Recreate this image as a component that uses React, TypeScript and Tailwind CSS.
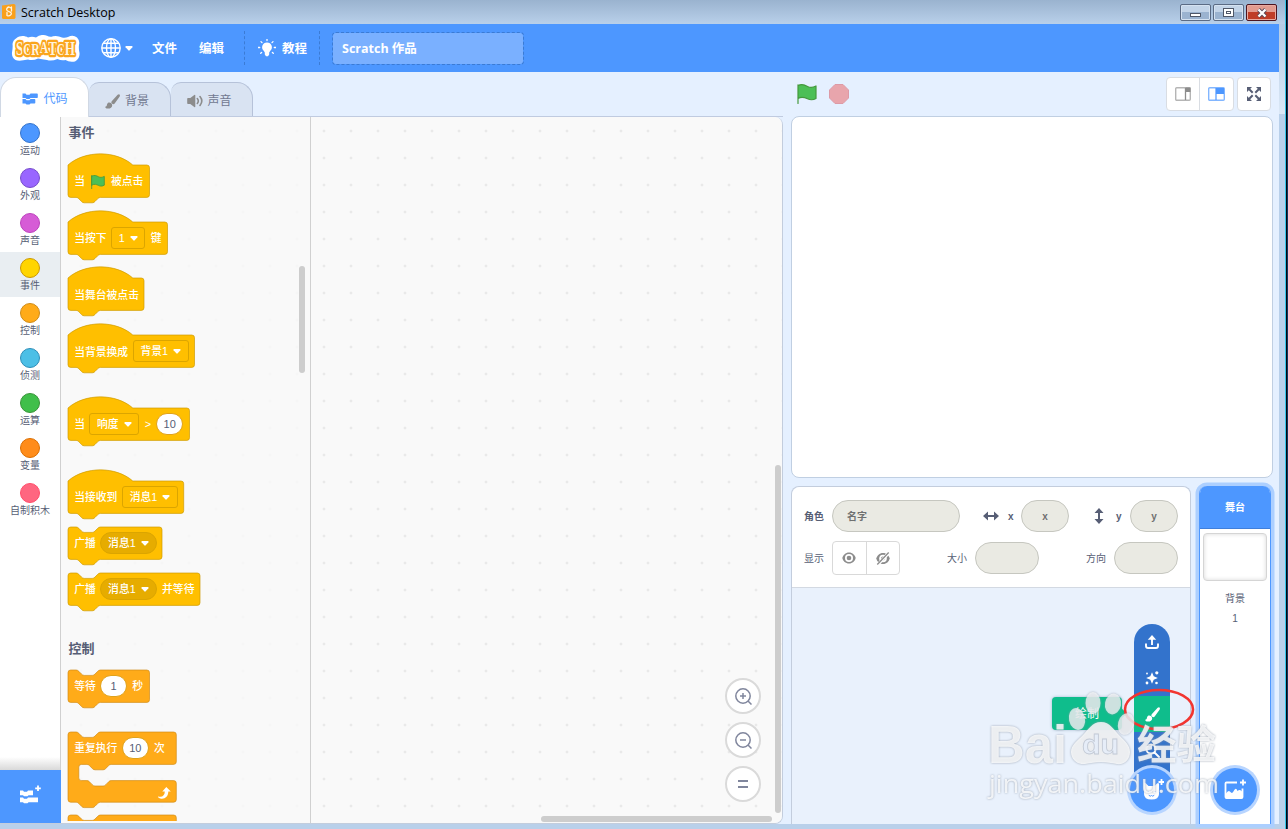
import { FC, PropsWithChildren, ReactNode } from "react";
import clsx from "clsx";

const SCALE = 0.675;

const NOTCH_RIGHT =
  "c2,0 3,1 4,2 l4,4 c1,1 2,2 4,2 h12 c2,0 3,-1 4,-2 l4,-4 c1,-1 2,-2 4,-2";
const NOTCH_LEFT =
  "c-2,0 -3,1 -4,2 l-4,4 c-1,1 -2,2 -4,2 h-12 c-2,0 -3,-1 -4,-2 l-4,-4 c-1,-1 -2,-2 -4,-2";

type Shape = "hat" | "stack" | "loop";

const blockPath = (shape: Shape, width: number) => {
  const w = width / SCALE - 4;
  const start =
    shape === "hat" ? "m0,0 c25,-22 71,-22 96,0" : `m0,4 a4,4 0 0,1 4,-4 h8 ${NOTCH_RIGHT}`;
  const head = `${start} H${w} a4,4 0 0,1 4,4 v40 a4,4 0 0,1 -4,4`;
  const end = `H48 ${NOTCH_LEFT} h-8 a4,4 0 0,1 -4,-4 z`;
  if (shape !== "loop") return `${head} ${end}`;
  return `${head} H64 ${NOTCH_LEFT} h-8 a4,4 0 0,0 -4,4 v16 a4,4 0 0,0 4,4 h8 ${NOTCH_RIGHT} H${w} a4,4 0 0,1 4,4 v24 a4,4 0 0,1 -4,4 ${end}`;
};

type BlockProps = PropsWithChildren<{
  shape: Shape;
  width: number;
  control?: boolean;
  className?: string;
}>;

const Block: FC<BlockProps> = ({ shape, width, control, className, children }) => (
  <div
    className={clsx("relative shrink-0", shape === "loop" ? "h-[70.2px]" : "h-[32.4px]", className)}
    style={{ width }}
  >
    <svg className="absolute left-0 top-0 size-full overflow-visible">
      <path
        d={blockPath(shape, width)}
        transform={`scale(${SCALE})`}
        fill={control ? "#ffab19" : "#ffbf00"}
        stroke={control ? "#cf8b17" : "#cc9900"}
        strokeWidth="1"
      />
      {shape === "loop" && (
        <path
          d={`M${width - 18},64.5 c4,1 6.500,-1 6.500,-5 h-2.500 l4,-4.500 l4.500,4.500 h-2.500 c0,5 -3.500,8 -8,7 c-2,-.6 -3,-2 -2,-2 z`}
          fill="#fff"
        />
      )}
    </svg>
    <div className="relative flex h-[32.4px] items-center gap-[5.4px] pt-[1.6px] pl-[6.2px] text-[10.8px] leading-none font-medium whitespace-nowrap text-white">
      {children}
    </div>
  </div>
);

const Caret = () => (
  <svg width="8" height="5" viewBox="0 0 8 5">
    <path d="M1 0h6q1 .4.400 1.200L4.700 4.300q-.7.700-1.400 0L.6 1.200Q0 .4 1 0z" fill="#fff" />
  </svg>
);

const Field: FC<PropsWithChildren<{ className: string; round?: boolean }>> = ({
  children,
  className,
  round,
}) => (
  <span
    className={clsx(
      "-mt-[1.6px] -ml-[1px] flex h-[21.6px] shrink-0 items-center justify-center gap-[5px] border border-[#dba500] pt-px",
      round ? "rounded-full bg-[#e6ac00]" : "rounded-[3px]",
      className,
    )}
  >
    {children}
    <Caret />
  </span>
);

const NumberInput: FC<{ value: number }> = ({ value }) => (
  <span className="-mt-[1.6px] -ml-[.8px] flex h-[21.6px] w-[26.6px] shrink-0 items-center justify-center rounded-full border border-[#e0a21a] bg-white pt-px text-[11px] font-normal text-[#575e75]">
    {value}
  </span>
);

const Flag: FC<{ className?: string }> = ({ className }) => (
  <svg viewBox="0 0 20 20" className={className}>
    <path
      d="M1 .8v18.700M1 1.600c4-2 7-.6 9.500.8s5 1.400 8.500-.4v12.500c-3.500 2-6 1.500-8.500.3s-5.500-2.500-9.500-.3z"
      fill="#4cbf56"
      stroke="#45993d"
      strokeWidth="1.200"
      strokeLinejoin="round"
      strokeLinecap="round"
    />
  </svg>
);

const CATEGORIES = [
  { name: "运动", fill: "#4c97ff", border: "#3373cc" },
  { name: "外观", fill: "#9966ff", border: "#774dcb" },
  { name: "声音", fill: "#d65cd6", border: "#bd42bd" },
  { name: "事件", fill: "#ffd500", border: "#cc9900" },
  { name: "控制", fill: "#ffab19", border: "#cf8b17" },
  { name: "侦测", fill: "#4cbfe6", border: "#2e8eb8" },
  { name: "运算", fill: "#40bf4a", border: "#389438" },
  { name: "变量", fill: "#ff8c1a", border: "#db6e00" },
  { name: "自制积木", fill: "#ff6680", border: "#ff4d6a" },
];

const TitleBar = () => (
  <div className="flex h-6 shrink-0 items-start bg-linear-to-b from-[#9ab3cf] to-[#b9d0ea]">
    <svg width="15" height="17" viewBox="0 0 15 17" className="mt-[3px] ml-[2px]">
      <path d="M0 2.500 11.500 1q2-.2 2 1.500v12q0 1.500-2 1.500H1.500Q0 16 0 14.500z" fill="#f9a01b" />
      <path
        d="M9.500 5.500Q7 2.800 5.200 5T7 8.600t1.800 3.200-3.800.7V9.500M9.500 4v4"
        fill="none"
        stroke="#fff3df"
        strokeWidth="1.300"
        strokeLinecap="round"
      />
    </svg>
    <span className="mt-[4px] ml-1 font-['Open_Sans','Noto_Sans',sans-serif] text-[12.5px] leading-[17px] text-black">
      Scratch Desktop
    </span>
    <div className="mt-1 ml-auto flex gap-[2px] pr-[8px]">
      <span className="flex h-[17px] w-[31px] items-center justify-center rounded-[2px] border border-[#5b6b84] bg-linear-to-b from-[#c3d4e8] from-50% to-[#9bb3d0] to-50% shadow-[inset_0_0_0_1px_#d5e2f1]">
        <span className="mt-1 h-[4px] w-[11px] border border-[#4f5768] bg-white" />
      </span>
      <span className="flex h-[17px] w-[31px] items-center justify-center rounded-[2px] border border-[#5b6b84] bg-linear-to-b from-[#c3d4e8] from-50% to-[#9bb3d0] to-50% shadow-[inset_0_0_0_1px_#d5e2f1]">
        <span className="flex h-[9px] w-[11px] items-center justify-center border border-[#4f5768] bg-white">
          <span className="h-[3px] w-[5px] border border-[#4f5768]" />
        </span>
      </span>
      <span className="flex h-[17px] w-[31px] items-center justify-center rounded-[2px] border border-[#4d1520] bg-linear-to-b from-[#e29b8f] from-50% to-[#bf3d27] to-50% shadow-[inset_0_0_0_1px_#e9aaa0]">
        <svg width="12" height="10" viewBox="0 0 12 10">
          <path d="m2.500 1.500 7 7m0-7-7 7" stroke="#5a4a58" strokeWidth="4" />
          <path d="m2.500 1.500 7 7m0-7-7 7" stroke="#fff" strokeWidth="2.300" />
        </svg>
      </span>
    </div>
  </div>
);

const Logo = () => (
  <svg width="70" height="27" viewBox="0 0 70 27" className="shrink-0">
    <path
      d="M6 3.500C10 0 15 .8 18 2.500q4-1.500 8 0Q31-1.500 37 .8q3 1.700 6 .4 5-.8 9 1.300 3 .8 6-.5 5-2.500 9 .5 3 3 2 7.500-.5 4 .5 8 .5 6-4.500 8.500-6 1-9.500-1.500-4 1-8-1-6 2.500-10.500 1-5-.8-9-1.500-5 2.500-10 1-9 2-12.500.5Q1.500 22.500 2 17.500 3 12 2.500 9 3 5 6 3.500z"
      fill="#fff"
    />
    <text
      x="6"
      y="20"
      fontFamily="'Liberation Serif', serif"
      fontSize="19"
      textLength="59"
      lengthAdjust="spacingAndGlyphs"
      fill="#fff3de"
      stroke="#faa51d"
      strokeWidth="4.500"
      strokeLinejoin="round"
      paintOrder="stroke"
    >
      <tspan>S</tspan>
      <tspan fontSize="16">C</tspan>
      <tspan fontSize="17">R</tspan>
      <tspan fontSize="17" dy="-2">A</tspan>
      <tspan dy="2">T</tspan>
      <tspan fontSize="16">C</tspan>
      <tspan>H</tspan>
    </text>
  </svg>
);

const MenuBar = () => (
  <div className="flex h-12 shrink-0 items-center bg-[#4d97ff] pl-[10px] text-[12.5px] font-bold text-white">
    <Logo />
    <svg width="20" height="20" viewBox="0 0 20 20" className="ml-[21px]" fill="none" stroke="#fff" strokeWidth="1.400">
      <circle cx="10" cy="10" r="9.200" />
      <ellipse cx="10" cy="10" rx="4.500" ry="9.200" />
      <path d="M10 1v18M1 10h18M2.500 5.200h15M2.500 14.800h15" />
    </svg>
    <span className="ml-1">
      <Caret />
    </span>
    <span className="ml-[19px] w-[25px] pt-[2px]">文件</span>
    <span className="ml-[22px] w-[25px] pt-[2px]">编辑</span>
    <span className="ml-5 h-[34px] border-l border-dashed border-[#3b7bd4]" />
    <svg width="18" height="18" viewBox="0 0 18 18" className="ml-[13px]">
      <path
        d="M9 3.400a4.800 4.800 0 0 1 3.100 8.500l-.7 1.300H6.600l-.7-1.300A4.800 4.800 0 0 1 9 3.400zM6.800 13h4.400v2.600L10 17.200H8l-1.200-1.600z"
        fill="#fff"
      />
      <path d="M9 .2v1.300M3 2.600l1 1M15 2.600l-1 1M.2 8.500h1.500M16.300 8.500h1.500M2.700 14.300l.9-.8M15.300 14.300l-.9-.8" stroke="#fff" strokeWidth="1.300" strokeLinecap="round" />
    </svg>
    <span className="ml-[6px] w-[25px] pt-[2px]">教程</span>
    <span className="ml-3 h-[34px] border-l border-dashed border-[#3b7bd4]" />
    <span className="ml-3 flex h-[33px] w-[192px] items-center rounded-[4px] border border-dashed border-[#3b7bd4] bg-[#7ab0ff] bg-clip-padding pt-[2px] pl-[9px] font-['Open_Sans','Noto_Sans_CJK_SC',sans-serif]">
      Scratch 作品
    </span>
  </div>
);

const CodeIcon = () => (
  <svg width="16" height="12" viewBox="0 0 16 12" fill="#4d97ff">
    <path d="M.5.500h3l1 1.200h3l1-1.200H15q.8 0 .8.800v2.900q0 .8-.8.800H8.500l-1 1H4.500l-1-1h-3zM.5 6h3l1 1.200h3L8.500 6h4q.8 0 .8.800v2.900q0 .8-.8.800h-4l-1 1H4.500l-1-1h-3z" />
  </svg>
);

const Brush: FC<{ className?: string }> = ({ className }) => (
  <svg viewBox="0 0 16 16" className={className} fill="currentColor">
    <path d="M15.400.4c.8.600.6 1.600.1 2.400l-5.200 7.300c-.8 1-2 .9-2.900.1s-.9-1.900 0-2.800L13.500.9c.6-.6 1.300-.9 1.900-.5z" />
    <path d="M3 9.500c1.900-1.200 4.700.3 4.700 2.500 0 2.800-2.700 3.900-5.200 3.500-.9-.1-1.900-.7-2.200-1.500-.2-.5.2-.8.700-.8 1.500-.1.600-2.500 2-3.700z" />
  </svg>
);

const Tabs = () => (
  <div className="flex h-[45px] items-end border-b border-[#c0cbe0] text-[12px]">
    <div className="-mb-px flex h-10 w-[89px] items-center justify-center gap-[5px] rounded-t-[16px] border border-b-0 border-[#d0d8e4] bg-white pt-[3px] pl-px text-[#4d97ff]">
      <CodeIcon />
      <span>代码</span>
    </div>
    <div className="flex h-[34px] w-[82px] items-center justify-center gap-[5px] rounded-tr-[16px] rounded-tl-[10px] border border-b-0 border-l-0 border-[#b6c2d9] bg-[#d9e3f2] pt-[3px] pr-[5px] text-[#717890]">
      <Brush className="size-[15px] text-[#8c8c8c]" />
      <span>背景</span>
    </div>
    <div className="flex h-[34px] w-[82px] items-center justify-center gap-[4px] rounded-tr-[16px] rounded-tl-[10px] border border-b-0 border-l-0 border-[#b6c2d9] bg-[#d9e3f2] pt-[3px] pr-[4px] text-[#717890]">
      <svg width="16" height="14" viewBox="0 0 16 14" fill="#8c8c8c">
        <path d="M1 4h2.300l4-3q1-.6 1 .6v10.800q0 1.200-1 .6l-4-3H1q-.8 0-.8-.8V4.800Q.2 4 1 4z" />
        <path d="M10.300 4.500q2 2.500 0 5M13 2.500q3.600 4.500 0 9" fill="none" stroke="#8c8c8c" strokeWidth="1.600" strokeLinecap="round" />
      </svg>
      <span>声音</span>
    </div>
  </div>
);

const Categories = () => (
  <div className="flex w-[61px] shrink-0 flex-col border-r border-[#d0d0d0] bg-white">
    {CATEGORIES.map(({ name, fill, border }) => (
      <div
        key={name}
        className={clsx(
          "flex h-[45px] flex-col items-center pt-[6px] text-[#575e75]",
          name === "事件" && "bg-[#e9eef2]",
        )}
      >
        <span
          className="size-5 shrink-0 rounded-full border"
          style={{ backgroundColor: fill, borderColor: border }}
        />
        <span className="mt-[2px] text-[10px] leading-[12px] whitespace-nowrap">{name}</span>
      </div>
    ))}
    <div className="mt-auto -mr-px">
      <div className="mr-px h-[13px] bg-linear-to-b from-white to-[#d9d9d9]" />
      <div className="flex h-[53px] items-center justify-center bg-[#4d97ff]">
        <svg width="22" height="20" viewBox="0 0 22 20" fill="#fff" className="mb-[3px]">
          <path d="M0 5.500h3l1 1.200h3l1-1.200h5v4.700H8.500l-1 1H4l-1-1H0zM0 12.500h3l1 1.200h3l1-1.200h10v4.700H8.500l-1 1H4l-1-1H0z" />
          <path d="M18 .5v5.600M15.200 3.300h5.600" stroke="#fff" strokeWidth="1.800" />
        </svg>
      </div>
    </div>
  </div>
);

const Palette = () => (
  <div className="relative flex w-[250px] shrink-0 flex-col overflow-hidden border-r border-[#d0d0d0] bg-[#f9f9f9] bg-[radial-gradient(circle_at_center,#f3f3f3_0.9px,transparent_1.2px)] bg-size-[27px_27px] bg-position-[6.5px_0.5px] pl-[7px]">
    <div className="flex h-[30px] shrink-0 items-center pt-px pl-[.6px] text-[13px] font-bold text-[#575e75]">事件</div>
    <Block shape="hat" width={81.5} className="mt-[17.9px]">
      当
      <Flag className="mx-[1px] size-[14px]" />
      <span className="-ml-[.8px]">被点击</span>
    </Block>
    <Block shape="hat" width={99.5} className="mt-[24.3px]">
      当按下
      <Field className="w-[34.4px]">1</Field>键
    </Block>
    <Block shape="hat" width={76} className="mt-[24.3px]">
      当舞台被点击
    </Block>
    <Block shape="hat" width={126.5} className="mt-[24.3px]">
      当背景换成
      <Field className="w-[56.5px]">背景1</Field>
    </Block>
    <Block shape="hat" width={121.5} className="mt-[40.5px]">
      当<Field className="w-[50px]">响度</Field>
      <span className="w-[7px]">&gt;</span>
      <NumberInput value={10} />
    </Block>
    <Block shape="hat" width={115.7} className="mt-[40.5px]">
      当接收到
      <Field className="w-[56.5px]">消息1</Field>
    </Block>
    <Block shape="stack" width={94} className="mt-[13.5px]">
      广播
      <Field round className="w-[56.5px]">消息1</Field>
    </Block>
    <Block shape="stack" width={132} className="mt-[13.5px]">
      广播
      <Field round className="w-[56.5px]">消息1</Field>
      并等待
    </Block>
    <div className="mt-[27.9px] flex h-[30px] shrink-0 items-center pt-px pl-[.6px] text-[13px] font-bold text-[#575e75]">控制</div>
    <Block shape="stack" control width={81.5} className="mt-[6.8px]">
      等待
      <NumberInput value={1} />秒
    </Block>
    <Block shape="loop" control width={108.3} className="mt-[29.8px]">
      重复执行
      <NumberInput value={10} />次
    </Block>
    <Block shape="loop" control width={108.3} className="mt-[13.5px]" />
    <div className="absolute right-[5px] top-[149px] h-[107px] w-[6px] rounded-full bg-[#cdcdcd]" />
    <div className="absolute inset-x-0 bottom-0 h-[2px] bg-[#f9f9f9]" />
  </div>
);

const ZoomButton: FC<PropsWithChildren> = ({ children }) => (
  <span className="flex size-9 items-center justify-center rounded-full border-2 border-[#dadada] bg-white">
    <svg width="18" height="18" viewBox="0 0 18 18" fill="none" stroke="#80869d" strokeWidth="1.500">
      {children}
    </svg>
  </span>
);

const Workspace = () => (
  <div className="relative min-w-0 flex-1 bg-[#f9f9f9] bg-[radial-gradient(circle_at_center,#dedede_0.9px,transparent_1.2px)] bg-size-[27px_27px] bg-position-[-0.5px_0.5px]">
    <div className="absolute right-[21px] bottom-[21px] flex flex-col gap-2">
      <ZoomButton>
        <circle cx="9" cy="9" r="7.200" />
        <path d="m14 14 3.500 3.500M9 6v6M6 9h6" />
      </ZoomButton>
      <ZoomButton>
        <circle cx="9" cy="9" r="7.200" />
        <path d="m14 14 3.500 3.500M6 9h6" />
      </ZoomButton>
      <ZoomButton>
        <path d="M4 6h10M4 12h10" strokeWidth="2" />
      </ZoomButton>
    </div>
    <div className="absolute right-px bottom-[10px] h-[348px] w-[6px] rounded-full bg-[#cdcdcd]" />
    <div className="absolute right-[10px] bottom-px h-[6px] w-[231px] rounded-full bg-[#cdcdcd]" />
  </div>
);

const StageHeader = () => (
  <div className="flex h-11 items-center pr-[2px] pl-[6px]">
    <Flag className="size-5" />
    <svg width="20" height="20" viewBox="0 0 20 20" className="ml-3">
      <path d="M6 .5h8L19.500 6v8L14 19.500H6L.5 14V6z" fill="#e8a5ac" stroke="#dd9aa6" />
    </svg>
    <div className="ml-auto flex h-[34px] w-[68px] rounded-[4px] border border-[#d9dde3] bg-white">
      <span className="flex w-[33px] items-center justify-center border-r border-[#d9dde3]">
        <svg width="16" height="14" viewBox="0 0 16 14">
          <rect x=".7" y=".7" width="14.600" height="12.600" rx="1" fill="#fff" stroke="#b5b5b5" strokeWidth="1.400" />
          <path d="M10.500 1v12" stroke="#8c8c8c" strokeWidth="1.300" />
          <path d="M10.500 .5H15.500v4.500h-5z" fill="#8c8c8c" />
        </svg>
      </span>
      <span className="flex flex-1 items-center justify-center">
        <svg width="17" height="14" viewBox="0 0 17 14">
          <rect x=".7" y=".7" width="15.600" height="12.600" rx="1" fill="#fff" stroke="#82b6ff" strokeWidth="1.400" />
          <path d="M8 1h8v6H8z" fill="#4d97ff" />
          <path d="M8 1v12" stroke="#4d97ff" strokeWidth="1.200" />
        </svg>
      </span>
    </div>
    <div className="ml-[3px] flex size-[34px] items-center justify-center rounded-[4px] border border-[#d9dde3] bg-white">
      <svg width="14" height="14" viewBox="0 0 14 14" fill="#575e75" stroke="#575e75">
        <path d="M0 0h5L0 5zM14 0v5L9 0zM0 14V9l5 5zM14 14H9l5-5z" stroke="none" />
        <path d="m2 2 3.700 3.700M12 2 8.300 5.700M2 12l3.700-3.700M12 12 8.300 8.300" strokeWidth="2" />
      </svg>
    </div>
  </div>
);

const Pill: FC<{ className: string; children?: ReactNode }> = ({ className, children }) => (
  <span
    className={clsx(
      "flex h-8 shrink-0 items-center rounded-full border border-[#c6c7c0] bg-[#eaeae3] text-[#6f7070]",
      className,
    )}
  >
    {children}
  </span>
);

const SpriteInfo = () => (
  <div className="h-[101px] shrink-0 border-b border-[#d3d9e2] bg-white pt-[13px] pl-[12px] text-[10px] text-[#575e75]">
    <div className="flex h-8 items-center font-bold">
      <span className="w-[28px] pt-px">角色</span>
      <Pill className="w-32 pt-px pl-[14px]">名字</Pill>
      <svg width="16" height="10" viewBox="0 0 16 10" className="ml-[23px]">
        <path d="M3 5h10" stroke="#575e75" strokeWidth="2" />
        <path d="M5 .5v9L0 5zM11 .5v9L16 5z" fill="#575e75" />
      </svg>
      <span className="ml-[9px] w-[13px] pt-px">x</span>
      <Pill className="w-12 justify-center pt-px">x</Pill>
      <svg width="10" height="16" viewBox="0 0 10 16" className="ml-[25px]">
        <path d="M5 3v10" stroke="#575e75" strokeWidth="2" />
        <path d="M.5 5h9L5 0zM.5 11h9L5 16z" fill="#575e75" />
      </svg>
      <span className="ml-[12px] w-[14px] pt-px">y</span>
      <Pill className="w-12 justify-center pt-px">y</Pill>
    </div>
    <div className="mt-[9px] flex h-[34px] items-center">
      <span className="w-[28px]">显示</span>
      <span className="flex h-[34px] w-[68px] rounded-[4px] border border-[#d9d9d9]">
        <span className="flex flex-1 items-center justify-center border-r border-[#d9d9d9]">
          <svg width="14" height="12" viewBox="0 0 14 12">
            <path d="M7 .5c3.500 0 6 2.500 6.700 5.500C13 9 10.500 11.500 7 11.500S1 9 .3 6C1 3 3.500.5 7 .5z" fill="#8c8c8c" />
            <circle cx="7" cy="6" r="4" fill="#fff" />
            <circle cx="7" cy="6" r="2.300" fill="#8c8c8c" />
          </svg>
        </span>
        <span className="flex flex-1 items-center justify-center">
          <svg width="14" height="13" viewBox="0 0 14 13">
            <path d="M7 1c3.500 0 6 2.500 6.700 5.500C13 9.500 10.500 12 7 12S1 9.500.3 6.500C1 3.500 3.500 1 7 1z" fill="#8c8c8c" />
            <circle cx="7" cy="6.500" r="3.800" fill="#fff" />
            <circle cx="7" cy="6.500" r="2" fill="#8c8c8c" />
            <path d="M1.500 13 13 .5" stroke="#fff" strokeWidth="3" />
            <path d="M1.300 12.500 12.700.5" stroke="#8c8c8c" strokeWidth="1.300" />
          </svg>
        </span>
      </span>
      <span className="ml-[47px] w-[28px]">大小</span>
      <Pill className="w-16" />
      <span className="ml-[47px] w-[28px]">方向</span>
      <Pill className="w-16" />
    </div>
  </div>
);

const RoundButton: FC<PropsWithChildren<{ className?: string }>> = ({ children, className }) => (
  <span
    className={clsx(
      "flex size-11 shrink-0 items-center justify-center rounded-full bg-[#4d97ff] shadow-[0_0_0_3px_#b8d5ff]",
      className,
    )}
  >
    {children}
  </span>
);

const SpriteMenu = () => (
  <div className="absolute right-[16px] bottom-[12px] flex flex-col items-center">
    <div className="flex w-9 flex-col items-center rounded-t-full bg-[#3373cc]">
      <span className="flex h-9 items-center">
        <svg width="14" height="14" viewBox="0 0 14 14" fill="none" stroke="#fff" strokeWidth="1.900">
          <path d="M1 8.500V11q0 2 2 2h8q2 0 2-2V8.500M7 10V3" />
          <path d="M7 0 2.800 4.800h8.400z" fill="#fff" stroke="none" />
        </svg>
      </span>
      <span className="flex h-9 items-center">
        <svg width="14" height="14" viewBox="0 0 14 14" fill="#fff">
          <path d="M7 1.200 8.700 5.300 12.800 7 8.700 8.700 7 12.800 5.300 8.700 1.200 7 5.300 5.300z" />
          <circle cx="11.800" cy="1.800" r="1.600" />
          <circle cx="2" cy="12" r="1.400" />
          <circle cx="11.500" cy="12" r="1.300" />
          <circle cx="2" cy="2.500" r=".9" />
        </svg>
      </span>
      <span className="relative flex size-9 items-center justify-center bg-[#0fbd8c]">
        <Brush className="size-[15px] text-white" />
        <span className="absolute top-px right-[48px] flex h-[33px] w-[70px] items-center justify-center rounded-[4px] bg-[#0fbd8c] text-[12px] text-white shadow-[0_0_3px_#5580a080]">
          绘制
          <span className="absolute -right-[3px] size-[9px] rotate-45 bg-[#0fbd8c]" />
        </span>
      </span>
      <span className="flex h-9 items-center">
        <svg width="15" height="15" viewBox="0 0 15 15" fill="none" stroke="#fff" strokeWidth="2">
          <circle cx="6" cy="6" r="4.600" />
          <path d="m9.500 9.500 4.500 4.500" strokeLinecap="round" />
        </svg>
      </span>
      <span className="h-[22px]" />
    </div>
    <RoundButton className="-mt-[22px]">
      <svg width="24" height="24" viewBox="0 0 24 24" fill="#fff">
        <path d="M4 5.500q.5-1.500 2 0l2.500 2.500h6L17 5.500q1.500-1.200 2 .5V16q0 5.500-7.500 5.500T4 16z" />
        <path d="M8 13.500h.5M14.500 13.500h.5M9 17.500q1.500 1.500 2.500 0 1 1.500 2.500 0" stroke="#4d97ff" fill="none" strokeLinecap="round" />
        <path d="M21.500 1v6M18.500 4h6" stroke="#fff" strokeWidth="1.800" />
      </svg>
    </RoundButton>
  </div>
);

const StageSelector = () => (
  <div className="flex w-[72px] shrink-0 flex-col items-center rounded-t-[8px] border-x border-[#4d97ff] bg-white text-[10px] text-[#575e75] shadow-[0_0_0_3.5px_#accfff]">
    <div className="flex h-[43px] w-full items-center justify-center rounded-t-[7px] border-b border-[#3f7fdb] bg-[#4d97ff] pt-px font-bold text-white">
      舞台
    </div>
    <div className="mt-1 h-12 w-16 rounded-[4px] border border-[#d5d5d5] bg-white shadow-[inset_0_0_4px_#d8d8d8]" />
    <span className="mt-[10px] leading-[15px]">背景</span>
    <span className="mt-[5px] leading-[15px]">1</span>
    <RoundButton className="mt-auto mb-[12px]">
      <svg width="24" height="22" viewBox="0 0 24 22">
        <path d="M14 3.500H3.500Q2.500 3.500 2.500 4.500V18q0 1 1 1h15q1 0 1-1V9.500" fill="none" stroke="#fff" strokeWidth="1.800" />
        <path d="M3 14.500q2.500-4.500 5-1 1.500 1.500 3-2 2-3.500 3.500.5 2.500-2.500 5 1V19H3z" fill="#fff" />
        <path d="M20 .500v6M17 3.500h6" stroke="#fff" strokeWidth="1.800" />
      </svg>
    </RoundButton>
  </div>
);

const Watermark = () => (
  <svg
    className="pointer-events-none absolute left-[980px] top-[684px] overflow-visible drop-shadow-[0_0_1.2px_#8d97a6]"
    width="245"
    height="125"
  >
    <g fill="#fff" opacity=".68">
      <ellipse cx="113" cy="19" rx="7.500" ry="11" />
      <ellipse cx="133" cy="20" rx="8" ry="10.500" transform="rotate(10 133 20)" />
      <ellipse cx="97" cy="35" rx="8" ry="11" transform="rotate(-12 97 35)" />
      <ellipse cx="146" cy="40" rx="8" ry="11" transform="rotate(15 146 40)" />
    </g>
    <g fill="#fff" opacity=".8">
      <text x="8" y="79" fontFamily="'Liberation Sans', sans-serif" fontWeight="700" fontSize="53" textLength="79" lengthAdjust="spacingAndGlyphs">
        Bai
      </text>
      <path d="M121 38c9 0 13 8 18 13 6 6 11 10 11 17 0 8-6 13-13 12-6-1-10-2-16-2s-10 1-16 2c-8 1-14-5-14-12s6-11 12-17c5-5 9-13 18-13z" />
      <text x="157" y="75" fontFamily="'Noto Sans CJK SC', sans-serif" fontWeight="700" fontSize="40" textLength="79" lengthAdjust="spacingAndGlyphs">
        经验
      </text>
      <text x="9" y="109" fontFamily="'Open Sans', 'Noto Sans', sans-serif" fontSize="26" textLength="230" lengthAdjust="spacingAndGlyphs">
        jingyan.baidu.com
      </text>
    </g>
    <text
      x="102"
      y="70"
      fontFamily="'Liberation Sans', sans-serif"
      fontWeight="700"
      fontSize="28"
      textLength="37"
      lengthAdjust="spacingAndGlyphs"
      fill="#e6edf8"
      stroke="#c3cad6"
      strokeWidth=".8"
    >
      du
    </text>
  </svg>
);

export default function App() {
  return (
    <div className="relative flex h-[829px] w-[1288px] overflow-hidden bg-[#b9d0ea] font-['Liberation_Sans','Noto_Sans_CJK_SC',sans-serif]">
      <div className="flex w-[1285px] flex-col">
        <TitleBar />
        <div className="flex h-[800px]">
          <div className="flex w-[1279px] flex-col bg-[#e5f0ff]">
            <MenuBar />
            <div className="flex min-h-0 flex-1">
              <div className="flex w-[783px] shrink-0 flex-col">
                <Tabs />
                <div className="flex min-h-0 flex-1 overflow-hidden rounded-r-[8px] border-r border-b border-[#c3cddd]">
                  <Categories />
                  <Palette />
                  <Workspace />
                </div>
              </div>
              <div className="ml-2 flex min-w-0 flex-1 flex-col pr-[6px]">
                <StageHeader />
                <div className="h-[362px] shrink-0 rounded-[8px] border border-[#c0cfe2] bg-white" />
                <div className="mt-2 flex min-h-0 flex-1 gap-2 pr-[2px]">
                  <div className="relative flex w-[400px] flex-col rounded-t-[8px] border border-b-0 border-[#c3cddd] bg-[#e9f1fc] *:first:rounded-t-[8px]">
                    <SpriteInfo />
                    <SpriteMenu />
                  </div>
                  <StageSelector />
                </div>
              </div>
            </div>
          </div>
          <div className="h-[90px] w-[6px] bg-linear-to-b from-[#b4cbe5] to-[#dbe8f6]" />
        </div>
      </div>
      <div className="w-px bg-[#35c5e8]" />
      <div className="w-px bg-[#05070d]" />
      <div className="flex-1 bg-[#12335c]" />
      <svg className="pointer-events-none absolute left-[1120px] top-[684px]" width="80" height="52">
        <ellipse cx="39" cy="25.500" rx="34" ry="19.500" fill="none" stroke="#f23530" strokeWidth="2.600" />
      </svg>
      <Watermark />
    </div>
  );
}
